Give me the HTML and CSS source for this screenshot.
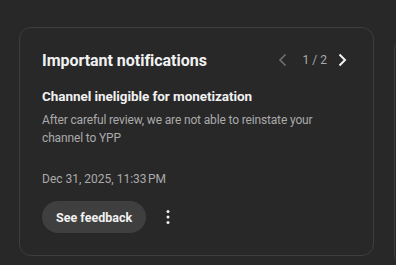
FILE: index.html
```html
<!DOCTYPE html>
<html lang="en">
<head>
  <meta charset="UTF-8">
  <title>Important notifications</title>
  <link rel="stylesheet" href="styles.css">
</head>
<body>

  <div class="page">
    <section class="card">
      <div class="card-head">
        <h2>Important notifications</h2>
        <div class="pager">
          <button class="pager-btn pager-prev" aria-label="Previous">
            <svg width="24" height="24" viewBox="0 0 24 24"><path d="M14.5 6.5 9 12l5.5 5.5" fill="none" stroke="currentColor" stroke-width="1.6"/></svg>
          </button>
          <span class="pager-count">1 / 2</span>
          <button class="pager-btn pager-next" aria-label="Next">
            <svg width="24" height="24" viewBox="0 0 24 24"><path d="M9.5 6.5 15 12l-5.5 5.5" fill="none" stroke="currentColor" stroke-width="2"/></svg>
          </button>
        </div>
      </div>

      <h3>Channel ineligible for monetization</h3>
      <p class="desc">After careful review, we are not able to reinstate your channel to YPP</p>

      <p class="date">Dec 31, 2025, 11:33&#8239;PM</p>

      <div class="actions">
        <button class="pill">See feedback</button>
        <button class="more" aria-label="More actions">
          <svg width="24" height="24" viewBox="0 0 24 24"><circle cx="12" cy="6.5" r="1.5" fill="currentColor"/><circle cx="12" cy="12" r="1.5" fill="currentColor"/><circle cx="12" cy="17.5" r="1.5" fill="currentColor"/></svg>
        </button>
      </div>
    </section>
    <section class="card card-next"></section>
  </div>

</body>
</html>
```

FILE: styles.css
```css
body {
  margin: 0;
  background-color: #282828;
  font-family: Roboto, "Noto Sans", sans-serif;
  color: #f1f1f1;
  overflow: hidden;
}
.page {
  display: flex;
  gap: 20px;
  padding: 27px 0 0 19px;
  width: 396px;
  box-sizing: border-box;
  overflow: hidden;
}
.card {
  box-sizing: border-box;
  width: 355px;
  height: 229px;
  flex: none;
  border: 1px solid #3e3e3e;
  border-radius: 12px;
  padding: 18px 22px 0 22px;
}
.card-next {
  margin-top: 10px;
}
.card-head {
  display: flex;
  align-items: center;
  justify-content: space-between;
  height: 28px;
}
h2 {
  margin: 0;
  font-size: 16px;
  font-weight: 700;
  letter-spacing: -0.03px;
  color: #f1f1f1;
}
.pager {
  display: flex;
  align-items: center;
  margin-right: -3px;
}
.pager-btn {
  background: none;
  border: none;
  padding: 0;
  width: 24px;
  height: 24px;
  color: #f1f1f1;
}
.pager-prev {
  color: #717171;
}
.pager-count {
  font-size: 12px;
  color: #aaaaaa;
  margin: 0 3px 0 8px;
}
h3 {
  margin: 14px 0 0;
  font-size: 13.5px;
  font-weight: 700;
  letter-spacing: -0.06px;
  color: #f1f1f1;
}
.desc {
  margin: 7px 0 0;
  font-size: 12px;
  line-height: 18px;
  letter-spacing: -0.15px;
  color: #aaaaaa;
}
.date {
  margin: 23px 0 0;
  font-size: 12px;
  line-height: 18px;
  color: #aaaaaa;
}
.actions {
  display: flex;
  align-items: center;
  gap: 10px;
  margin-top: 13px;
}
.pill {
  height: 32px;
  padding: 0 14px;
  border: none;
  border-radius: 16px;
  background-color: #3f3f3f;
  color: #f1f1f1;
  font-family: inherit;
  font-size: 12.5px;
  font-weight: 700;
}
.more {
  background: none;
  border: none;
  padding: 0;
  width: 24px;
  height: 24px;
  color: #f1f1f1;
}
```
